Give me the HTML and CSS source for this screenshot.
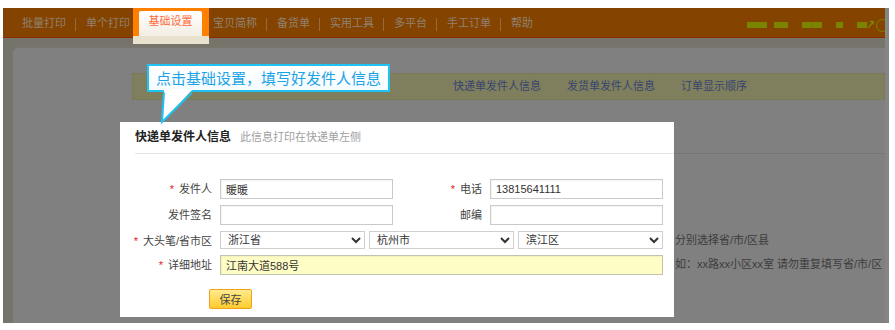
FILE: index.html
```html
<!DOCTYPE html>
<html lang="zh-CN">
<head>
<meta charset="utf-8">
<title>基础设置</title>
<link rel="stylesheet" href="styles.css">
</head>
<body>
<div class="page">
  <div class="nav">
    <a class="nav-item">批量打印</a><span class="sep"></span>
    <a class="nav-item">单个打印</a>
    <div class="nav-active">
      <div class="nav-active-top"><div class="nav-active-inner">基础设置</div></div>
      <div class="nav-active-foot"></div>
    </div>
    <a class="nav-item">宝贝简称</a><span class="sep"></span>
    <a class="nav-item">备货单</a><span class="sep"></span>
    <a class="nav-item">实用工具</a><span class="sep"></span>
    <a class="nav-item">多平台</a><span class="sep"></span>
    <a class="nav-item">手工订单</a><span class="sep"></span>
    <a class="nav-item">帮助</a>
    <div class="nav-tools">
      <span class="blk b1"></span>
      <span class="blk b2"></span>
      <span class="blk b3"></span>
      <span class="blk b4"></span>
      <span class="blk b5"></span>
      <svg class="tool-arrow" width="7" height="9" viewBox="0 0 7 9"><path d="M1 8 L6 2 M3 1.5 H6.2 V4.5" fill="none" stroke="#7a8400" stroke-width="1.4"/></svg>
      <span class="tool-circle"></span>
    </div>
  </div>

  <div class="content">
    <div class="subtabs">
      <span>快递单发件人信息</span>
      <span>发货单发件人信息</span>
      <span>订单显示顺序</span>
    </div>

    <div class="panel">
      <div class="panel-main">
        <div class="panel-head"><b class="title">快递单发件人信息</b><span class="muted">此信息打印在快递单左侧</span></div>
        <div class="form">
          <label class="label"><span class="star">*</span>发件人</label>
          <input class="field" value="暖暖">
          <label class="label"><span class="star">*</span>电话</label>
          <input class="field" value="13815641111">

          <label class="label">发件签名</label>
          <input class="field" value="">
          <label class="label">邮编</label>
          <input class="field" value="">

          <label class="label"><span class="star">*</span>大头笔/省市区</label>
          <div class="selects">
            <select class="sel"><option>浙江省</option></select>
            <select class="sel"><option>杭州市</option></select>
            <select class="sel"><option>滨江区</option></select>
          </div>

          <label class="label"><span class="star">*</span>详细地址</label>
          <input class="field wide" value="江南大道588号">
        </div>
        <div class="actions"><button class="btn">保存</button></div>
      </div>
      <div class="panel-side">
        <div class="panel-head side-head"></div>
        <div class="side-rows">
          <div></div>
          <div></div>
          <div class="hint">分别选择省/市/区县</div>
          <div class="hint">如：xx路xx小区xx室 请勿重复填写省/市/区</div>
        </div>
      </div>
    </div>

    <div class="callout">点击基础设置，填写好发件人信息</div>
    <svg class="callout-tail" width="36" height="36" viewBox="0 0 36 36">
      <polygon points="4,0 2,33 33,0" fill="#ffffff"/>
      <polyline points="4,3.5 2,33 32,3.5" fill="none" stroke="#1ec3f3" stroke-width="2"/>
    </svg>
  </div>
</div>
</body>
</html>
```

FILE: styles.css
```css
* { box-sizing: border-box; }

body {
  margin: 0;
  background: #ffffff;
  font-family: "Liberation Sans", "Noto Sans CJK SC", sans-serif;
  font-size: 11px;
}

.page {
  margin: 8px 0 0 3px;
  width: 886px;
  height: 315px;
  border-right: 4px solid #858585;
  background: #75736a;
  overflow: hidden;
}

/* top navigation */
.nav {
  display: flex;
  align-items: flex-start;
  height: 30px;
  padding-left: 9px;
  background: #844400;
  border-bottom: 1px solid #8c2c00;
}

.nav-item {
  padding: 0 9px 0 10px;
  line-height: 31px;
  color: #908171;
  white-space: nowrap;
}

.sep {
  width: 1px;
  height: 13px;
  margin-top: 10px;
  background: #9a6a3e;
}

.nav-active {
  position: relative;
  z-index: 1;
  width: 76px;
  margin: 0 -6px 0 -6px;
  display: flex;
  flex-direction: column;
}

.nav-active-top {
  height: 28px;
  padding: 3px 7px 0 6px;
  background: #ff8000;
}

.nav-active-inner {
  height: 25px;
  border-radius: 2px 2px 0 0;
  background: linear-gradient(#ffffff, #f3eee4);
  color: #ff6a3a;
  text-align: center;
  line-height: 21px;
}

.nav-active-foot {
  height: 8px;
  background: #e7e1cd;
}

.nav-tools {
  margin-left: auto;
  margin-right: -4px;
  height: 29px;
  padding-top: 5px;
  display: flex;
  align-items: center;
}

.blk {
  height: 6px;
  background: #7a8400;
}
.b1 { width: 20px; }
.b2 { width: 14px; margin-left: 7px; }
.b3 { width: 20px; margin-left: 14px; background: linear-gradient(90deg, #7a8400 45%, #6f7a08 50%, #7a8400 55%); }
.b4 { width: 7px; margin-left: 14px; }
.b5 { width: 10px; margin-left: 14px; }

.tool-arrow { display: block; margin-top: -2px; }

.tool-circle {
  width: 13px;
  height: 13px;
  margin-left: 2px;
  border: 1.5px solid #7a8400;
  border-radius: 50%;
}

/* content area */
.content {
  position: relative;
  margin: 9px 0 0 9px;
  height: 276px;
  border-top: 1px solid #78766d;
  border-left: 1px solid #78766d;
  border-radius: 6px 0 0 0;
  background: #808080;
  padding: 25px 0 0 107px;
}

.subtabs {
  margin-left: 12px;
  height: 27px;
  border: 1px solid #7a7a57;
  background: #7f7f5e;
  display: flex;
  gap: 26px;
  padding-left: 320px;
  line-height: 25px;
  color: #374470;
  white-space: nowrap;
}

.panel {
  display: flex;
  margin-top: 22px;
}

.panel-main {
  width: 554px;
  height: 195px;
  background: #ffffff;
}

.panel-head {
  margin-left: 15px;
  height: 32px;
  border-bottom: 1px solid #e6e6e6;
  line-height: 31px;
  white-space: nowrap;
}

.title {
  font-size: 12px;
  font-weight: bold;
  color: #222222;
}

.muted {
  margin-left: 9px;
  color: #a0a0a0;
}

.form {
  display: grid;
  grid-template-columns: 92px 173px 81px 173px;
  grid-template-rows: 20px 20px 18px 20px;
  column-gap: 8px;
  row-gap: 6px;
  margin-top: 25px;
}

.label {
  text-align: right;
  line-height: 20px;
  color: #444444;
  white-space: nowrap;
}

.star {
  color: #e5151b;
  margin-right: 5px;
}

.field {
  height: 20px;
  width: 100%;
  border: 1px solid #cacaca;
  box-shadow: inset 1px 1px 1px rgba(0, 0, 0, 0.05);
  padding: 0 5px;
  font: inherit;
  color: #333333;
  background: #ffffff;
  outline: none;
}

.field.wide {
  grid-column: 2 / 5;
  background: #fffdc6;
  border-color: #c2c2ae;
}

.selects {
  grid-column: 2 / 5;
  display: flex;
  gap: 4px;
}

.sel {
  flex: 1;
  min-width: 0;
  height: 18px;
  border: 1px solid #cfcfcf;
  border-radius: 0;
  background: #ffffff;
  padding: 0 0 0 3px;
  font: inherit;
  font-size: 11px;
  color: #333333;
}

.actions {
  margin: 14px 0 0 89px;
}

.btn {
  width: 43px;
  height: 20px;
  padding: 0;
  border: 1px solid #eda21c;
  border-radius: 2px;
  background: linear-gradient(#ffec90, #ffcb2c);
  color: #444444;
  font: inherit;
}

.panel-side {
  flex: 1;
}

.side-head {
  margin-left: 0;
  border-bottom-color: #767676;
}

.side-rows {
  display: grid;
  grid-template-rows: 20px 20px 18px 20px;
  row-gap: 6px;
  margin-top: 25px;
  padding-left: 1px;
  color: #3c3c3c;
  white-space: nowrap;
}

.hint { line-height: 19px; }

/* tooltip callout */
.callout {
  position: absolute;
  left: 134px;
  top: 16px;
  width: 243px;
  height: 28px;
  border: 2px solid #1ec3f3;
  background: linear-gradient(#ffffff, #f4fbff);
  color: #1ca3e6;
  font-family: "Noto Sans CJK SC", sans-serif;
  font-size: 15px;
  line-height: 23px;
  padding-left: 7px;
  white-space: nowrap;
}

.callout-tail {
  position: absolute;
  left: 147px;
  top: 41px;
  display: block;
}
```
